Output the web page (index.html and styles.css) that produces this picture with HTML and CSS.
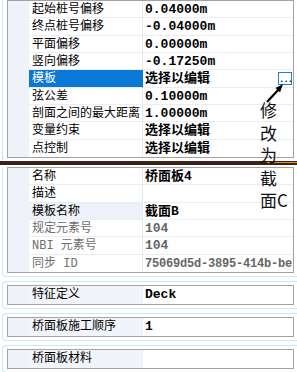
FILE: index.html
```html
<!DOCTYPE html>
<html>
<head>
<meta charset="utf-8">
<link rel="stylesheet" href="styles.css">
</head>
<body>
<div class="frame frame-top">
  <div class="box">
    <div class="row"><div class="gut"></div><div class="name">起始桩号偏移</div><div class="val">0.04000m</div></div>
    <div class="row"><div class="gut"></div><div class="name">终点桩号偏移</div><div class="val">-0.04000m</div></div>
    <div class="row"><div class="gut"></div><div class="name">平面偏移</div><div class="val">0.00000m</div></div>
    <div class="row"><div class="gut"></div><div class="name">竖向偏移</div><div class="val">-0.17250m</div></div>
    <div class="row sel"><div class="gut"></div><div class="name">模板</div><div class="val">选择以编辑<span class="dots">...</span></div></div>
    <div class="row"><div class="gut"></div><div class="name">弦公差</div><div class="val">0.10000m</div></div>
    <div class="row"><div class="gut"></div><div class="name">剖面之间的最大距离</div><div class="val">1.00000m</div></div>
    <div class="row"><div class="gut"></div><div class="name">变量约束</div><div class="val">选择以编辑</div></div>
    <div class="row"><div class="gut"></div><div class="name">点控制</div><div class="val">选择以编辑</div></div>
  </div>
</div>
<div class="splitter"><span class="glow"></span></div>
<div class="frame frame-mid">
  <div class="box">
    <div class="row"><div class="gut"></div><div class="name">名称</div><div class="val">桥面板4</div></div>
    <div class="row"><div class="gut"></div><div class="name">描述</div><div class="val"></div></div>
    <div class="row tint"><div class="gut"></div><div class="name">模板名称</div><div class="val">截面B</div></div>
    <div class="row ro"><div class="gut"></div><div class="name">规定元素号</div><div class="val">104</div></div>
    <div class="row ro"><div class="gut"></div><div class="name">NBI 元素号</div><div class="val">104</div></div>
    <div class="row ro"><div class="gut"></div><div class="name">同步 ID</div><div class="val id">75069d5d-3895-414b-be</div></div>
  </div>
</div>
<div class="frame frame-small">
  <div class="box">
    <div class="row single"><div class="gut"></div><div class="name">特征定义</div><div class="val serif">Deck</div></div>
  </div>
</div>
<div class="frame frame-small">
  <div class="box">
    <div class="row single"><div class="gut"></div><div class="name">桥面板施工顺序</div><div class="val serif">1</div></div>
  </div>
</div>
<div class="frame frame-small">
  <div class="box">
    <div class="row single"><div class="gut"></div><div class="name">桥面板材料</div><div class="val serif"></div></div>
  </div>
</div>

<div class="note">修改为截面C</div>
<svg class="arrow" width="30" height="30" viewBox="0 0 30 30">
  <line x1="7" y1="24" x2="19" y2="11" stroke="#000" stroke-width="2.2"/>
  <polygon points="23,6 15.5,10 20,14.5" fill="#000"/>
</svg>
</body>
</html>
```

FILE: styles.css
```css
html, body {
  margin: 0;
  padding: 0;
}
body {
  width: 297px;
  height: 372px;
  overflow: hidden;
  position: relative;
  background: #ffffff;
  font-family: "Liberation Mono", "Noto Sans CJK SC", monospace;
  color: #000;
}
.frame {
  margin-left: 2px;
  border-left: 1px solid #cde6f7;
  padding-left: 4px;
  padding-right: 3px;
  background: #fff;
}
.frame-top {
  padding-bottom: 2px;
}
.frame-mid {
  margin-top: 2px;
  border-bottom: 1px solid #cde6f7;
  border-bottom-left-radius: 4px;
  padding-bottom: 3px;
}
.frame-small {
  margin-top: 4px;
  border-top: 1px solid #cde6f7;
  border-bottom: 1px solid #cde6f7;
  border-radius: 4px 0 0 4px;
  padding-top: 3px;
  padding-bottom: 3px;
}
.box {
  border: 1px solid #a2a2a2;
  background: #fff;
}
.row {
  display: grid;
  grid-template-columns: 21px 113px 151px;
  height: 17.33px;
  box-sizing: border-box;
}
.row.single {
  height: 18px;
}
.gut {
  background: #eff3f9;
}
.name, .val {
  border-bottom: 1px solid #e9eef5;
  box-sizing: border-box;
  white-space: nowrap;
  overflow: hidden;
  line-height: 16px;
  padding-top: 1px;
}
.name {
  font-size: 12px;
  padding-left: 3px;
}
.val {
  border-left: 1px solid #e3e9f2;
  padding-left: 2px;
  font-size: 13px;
  font-weight: bold;
  position: relative;
}
.row:last-child .name, .row:last-child .val {
  border-bottom: none;
}
.sel .name {
  background: #0a78d7;
  color: #fff;
}
.sel .val {
  border-left-color: #0a78d7;
}
.dots {
  position: absolute;
  right: 1px;
  top: 2px;
  width: 12px;
  height: 11px;
  border: 1px solid #1c7fd8;
  background: #fff;
  font-size: 9px;
  line-height: 14px;
  text-align: center;
  font-weight: bold;
  letter-spacing: -1px;
  overflow: hidden;
}
.tint .name {
  background: #eef2f8;
}
.ro .name {
  color: #6e6e6e;
}
.ro .val {
  color: #666;
}
.val.id {
  font-size: 12px;
  letter-spacing: -0.2px;
}
.single .name {
  background: #f1f4fa;
}
.single .val {
  border-left-color: #eaf0f7;
}
.splitter {
  margin-top: 1px;
  height: 4px;
  background: #3a2218;
  display: flex;
  align-items: center;
  justify-content: flex-end;
}
.glow {
  display: block;
  width: 30px;
  height: 1px;
  background: #f08a1e;
}
.note {
  position: absolute;
  left: 260px;
  top: 99px;
  width: 30px;
  font-family: "Noto Sans CJK SC", sans-serif;
  font-size: 17px;
  line-height: 22.5px;
  color: #111;
  word-break: break-all;
}
.arrow {
  position: absolute;
  left: 260px;
  top: 78px;
}
```
